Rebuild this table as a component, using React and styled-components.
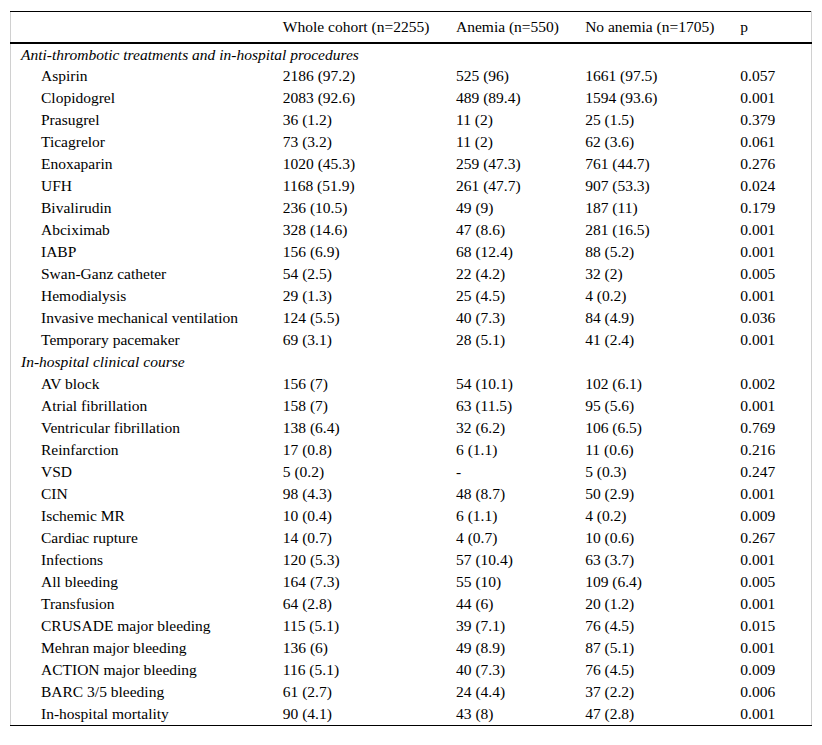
import { createGlobalStyle, styled } from "styled-components";

const GlobalStyle = createGlobalStyle`
  body {
    margin: 0;
    background: #fff;
    font-family: "Liberation Serif", "Times New Roman", serif;
    color: #000;
  }
`;

const Frame = styled.div`
  padding: 11px 10px 0 10px;
`;

const Table = styled.table`
  width: 802px;
  table-layout: fixed;
  border-collapse: collapse;
  border-left: 1px solid #d0d0d0;
  border-right: 1px solid #d0d0d0;
  border-top: 1px solid #000;
  border-bottom: 1px solid #000;
  font-family: "Liberation Serif", "Times New Roman", serif;
  font-size: 15.5px;
  line-height: 18px;
  color: #000;
`;

const Col = styled.col`
  width: ${(p) => p.$w}px;
`;

const HeadCell = styled.th`
  font-weight: normal;
  text-align: left;
  height: 30px;
  padding: 0 0 0 10px;
  border-bottom: 2px solid #000;
  white-space: nowrap;
`;

const Row = styled.tr`
  height: 22px;
`;

const Cell = styled.td`
  padding: 0 0 0 ${(p) => (p.$indent ? 30 : 10)}px;
  white-space: nowrap;
  vertical-align: middle;
`;

const SectionCell = styled.td`
  padding: 0 0 0 10px;
  font-style: italic;
  white-space: nowrap;
`;

const sections = [
  {
    title: "Anti-thrombotic treatments and in-hospital procedures",
    rows: [
      ["Aspirin", "2186 (97.2)", "525 (96)", "1661 (97.5)", "0.057"],
      ["Clopidogrel", "2083 (92.6)", "489 (89.4)", "1594 (93.6)", "0.001"],
      ["Prasugrel", "36 (1.2)", "11 (2)", "25 (1.5)", "0.379"],
      ["Ticagrelor", "73 (3.2)", "11 (2)", "62 (3.6)", "0.061"],
      ["Enoxaparin", "1020 (45.3)", "259 (47.3)", "761 (44.7)", "0.276"],
      ["UFH", "1168 (51.9)", "261 (47.7)", "907 (53.3)", "0.024"],
      ["Bivalirudin", "236 (10.5)", "49 (9)", "187 (11)", "0.179"],
      ["Abciximab", "328 (14.6)", "47 (8.6)", "281 (16.5)", "0.001"],
      ["IABP", "156 (6.9)", "68 (12.4)", "88 (5.2)", "0.001"],
      ["Swan-Ganz catheter", "54 (2.5)", "22 (4.2)", "32 (2)", "0.005"],
      ["Hemodialysis", "29 (1.3)", "25 (4.5)", "4 (0.2)", "0.001"],
      ["Invasive mechanical ventilation", "124 (5.5)", "40 (7.3)", "84 (4.9)", "0.036"],
      ["Temporary pacemaker", "69 (3.1)", "28 (5.1)", "41 (2.4)", "0.001"],
    ],
  },
  {
    title: "In-hospital clinical course",
    rows: [
      ["AV block", "156 (7)", "54 (10.1)", "102 (6.1)", "0.002"],
      ["Atrial fibrillation", "158 (7)", "63 (11.5)", "95 (5.6)", "0.001"],
      ["Ventricular fibrillation", "138 (6.4)", "32 (6.2)", "106 (6.5)", "0.769"],
      ["Reinfarction", "17 (0.8)", "6 (1.1)", "11 (0.6)", "0.216"],
      ["VSD", "5 (0.2)", "-", "5 (0.3)", "0.247"],
      ["CIN", "98 (4.3)", "48 (8.7)", "50 (2.9)", "0.001"],
      ["Ischemic MR", "10 (0.4)", "6 (1.1)", "4 (0.2)", "0.009"],
      ["Cardiac rupture", "14 (0.7)", "4 (0.7)", "10 (0.6)", "0.267"],
      ["Infections", "120 (5.3)", "57 (10.4)", "63 (3.7)", "0.001"],
      ["All bleeding", "164 (7.3)", "55 (10)", "109 (6.4)", "0.005"],
      ["Transfusion", "64 (2.8)", "44 (6)", "20 (1.2)", "0.001"],
      ["CRUSADE major bleeding", "115 (5.1)", "39 (7.1)", "76 (4.5)", "0.015"],
      ["Mehran major bleeding", "136 (6)", "49 (8.9)", "87 (5.1)", "0.001"],
      ["ACTION major bleeding", "116 (5.1)", "40 (7.3)", "76 (4.5)", "0.009"],
      ["BARC 3/5 bleeding", "61 (2.7)", "24 (4.4)", "37 (2.2)", "0.006"],
      ["In-hospital mortality", "90 (4.1)", "43 (8)", "47 (2.8)", "0.001"],
    ],
  },
];

const headers = ["", "Whole cohort (n=2255)", "Anemia (n=550)", "No anemia (n=1705)", "p"];
const widths = [262, 173, 129, 155, 81];

function App() {
  return (
    <Frame>
      <GlobalStyle />
      <Table>
        <colgroup>
          {widths.map((w, i) => (
            <Col key={i} $w={w} />
          ))}
        </colgroup>
        <thead>
          <tr>
            {headers.map((h, i) => (
              <HeadCell key={i}>{h}</HeadCell>
            ))}
          </tr>
        </thead>
        <tbody>
          {sections.map((s) => [
            <Row key={s.title}>
              <SectionCell colSpan={5}>{s.title}</SectionCell>
            </Row>,
            ...s.rows.map((r) => (
              <Row key={r[0]}>
                {r.map((v, i) => (
                  <Cell key={i} $indent={i === 0}>
                    {v}
                  </Cell>
                ))}
              </Row>
            )),
          ])}
        </tbody>
      </Table>
    </Frame>
  );
}

export default App;
